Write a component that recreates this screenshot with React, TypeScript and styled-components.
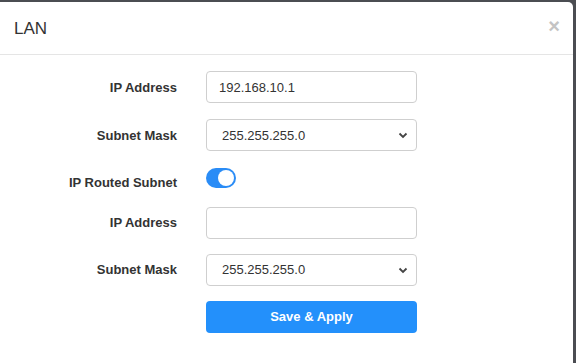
import React from "react";
import styled, { createGlobalStyle } from "styled-components";

const Global = createGlobalStyle`
  html, body { margin: 0; padding: 0; background: #4b4d52; }
  body { font-family: "Liberation Sans", Arial, sans-serif; overflow: hidden; }
  * { box-sizing: border-box; }
`;

const Backdrop = styled.div`
  width: 576px;
  height: 363px;
  padding: 2px 3px 0 0;
  background: #4b4d52;
`;

const Modal = styled.div`
  width: 573px;
  height: 361px;
  background: #fff;
  border-radius: 0 5px 0 0;
  display: flex;
  flex-direction: column;
`;

const Header = styled.div`
  height: 53px;
  border-bottom: 1px solid #e5e5e5;
  display: flex;
  align-items: center;
  justify-content: space-between;
  padding: 0 14px 0 14px;
`;

const Title = styled.h4`
  margin: 0;
  font-size: 17px;
  font-weight: normal;
  color: #333;
  padding-top: 1px;
`;

const Close = styled.span`
  font-size: 20px;
  font-weight: bold;
  color: #c4c4c4;
  line-height: 1;
  margin-top: -4px;
  margin-right: -1px;
`;

const Body = styled.div`
  padding: 8px 0 0 0;
  display: flex;
  flex-direction: column;
`;

const Row = styled.div<{ $h: number }>`
  display: grid;
  grid-template-columns: 177px 211px;
  column-gap: 29px;
  align-items: center;
  height: ${(p) => p.$h}px;
`;

const Label = styled.label<{ $dy?: number }>`
  text-align: right;
  font-weight: bold;
  font-size: 13px;
  color: #333;
  position: relative;
  top: ${(p) => p.$dy ?? 0}px;
`;

const Field = styled.div`
  height: 32px;
  border: 1px solid #cfcfcf;
  border-radius: 4px;
  display: flex;
  align-items: center;
  justify-content: space-between;
  padding: 0 8px 0 12px;
  font-size: 13px;
  color: #333;
`;

const SelectText = styled.span`
  padding-left: 3px;
`;

const Toggle = styled.div`
  width: 30px;
  height: 20px;
  border-radius: 10px;
  background: #2a8cf6;
  display: flex;
  align-items: center;
  justify-content: flex-end;
  padding: 0 2px;
  margin-top: -3px;
`;

const Knob = styled.div`
  width: 16px;
  height: 16px;
  border-radius: 50%;
  background: #fff;
`;

const Button = styled.button`
  height: 32px;
  border: none;
  border-radius: 4px;
  background: #2390fb;
  color: #fff;
  font-family: "Liberation Sans", Arial, sans-serif;
  font-size: 13px;
  font-weight: bold;
`;

const Chevron = () => (
  <svg width="10" height="8" viewBox="0 0 10 8">
    <path d="M1.5 2.5 L5 6 L8.5 2.5" stroke="#444" strokeWidth="1.8" fill="none" />
  </svg>
);

export default function App() {
  return (
    <>
      <Global />
      <Backdrop>
        <Modal>
          <Header>
            <Title>LAN</Title>
            <Close>×</Close>
          </Header>
          <Body>
            <Row $h={48}>
              <Label>IP Address</Label>
              <Field>192.168.10.1</Field>
            </Row>
            <Row $h={48}>
              <Label>Subnet Mask</Label>
              <Field>
                <SelectText>255.255.255.0</SelectText>
                <Chevron />
              </Field>
            </Row>
            <Row $h={40}>
              <Label $dy={3}>IP Routed Subnet</Label>
              <Toggle>
                <Knob />
              </Toggle>
            </Row>
            <Row $h={47}>
              <Label>IP Address</Label>
              <Field />
            </Row>
            <Row $h={47}>
              <Label>Subnet Mask</Label>
              <Field>
                <SelectText>255.255.255.0</SelectText>
                <Chevron />
              </Field>
            </Row>
            <Row $h={47}>
              <span />
              <Button>Save &amp; Apply</Button>
            </Row>
          </Body>
        </Modal>
      </Backdrop>
    </>
  );
}
